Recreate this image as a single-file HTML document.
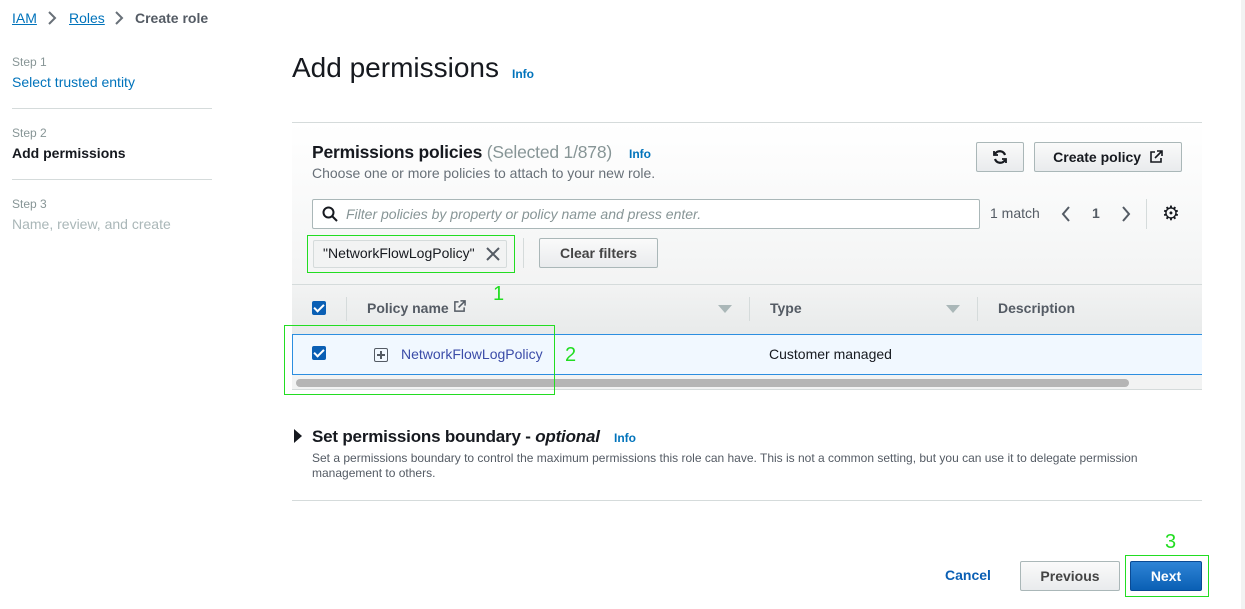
<!DOCTYPE html>
<html><head><meta charset="utf-8"><style>
*{box-sizing:border-box;margin:0;padding:0}
body{width:1245px;height:609px;position:relative;overflow:hidden;background:#fff;font-family:"Liberation Sans",Arial,sans-serif;color:#16191f;font-size:14px}
.a{position:absolute;white-space:nowrap}
.link{color:#0073bb}
.btn{position:absolute;border:1px solid #aab7b8;border-radius:2px;background:linear-gradient(#fafafa,#e9ebed);font-weight:bold;color:#444;font-size:14px;display:flex;align-items:center;justify-content:center}
.g{position:absolute;border:1px solid #22dd22}
.gn{position:absolute;color:#22dd22;font-size:20px}
.cb{position:absolute;width:14px;height:14px;background:#0a5fb4;border-radius:2px}
.cb:after{content:"";position:absolute;left:4px;top:1px;width:4px;height:8px;border:solid #fff;border-width:0 2px 2px 0;transform:rotate(45deg)}
.sep{position:absolute;width:1px;background:#d5dbdb}
</style></head><body>
<div style="position:absolute;right:0;top:0;width:4px;height:609px;background:#f2f3f3"></div>
<div class="a" style="left:12px;top:10px;font-size:14px"><span class="link" style="text-decoration:underline">IAM</span></div>
<svg class="a" style="left:47px;top:11px" width="10" height="14" viewBox="0 0 10 14" fill="none" stroke="#687078" stroke-width="2"><path d="M2 1l6 6-6 6"/></svg>
<div class="a" style="left:69px;top:10px"><span class="link" style="text-decoration:underline">Roles</span></div>
<svg class="a" style="left:114px;top:11px" width="10" height="14" viewBox="0 0 10 14" fill="none" stroke="#687078" stroke-width="2"><path d="M2 1l6 6-6 6"/></svg>
<div class="a" style="left:135px;top:10px;font-weight:bold;color:#545b64">Create role</div>

<div class="a" style="left:12px;top:55px;font-size:12px;color:#879596">Step 1</div>
<div class="a link" style="left:12px;top:74px">Select trusted entity</div>
<div style="position:absolute;left:12px;top:108px;width:200px;height:1px;background:#d5dbdb"></div>
<div class="a" style="left:12px;top:126px;font-size:12px;color:#879596">Step 2</div>
<div class="a" style="left:12px;top:145px;font-weight:bold">Add permissions</div>
<div style="position:absolute;left:12px;top:179px;width:200px;height:1px;background:#d5dbdb"></div>
<div class="a" style="left:12px;top:197px;font-size:12px;color:#879596">Step 3</div>
<div class="a" style="left:12px;top:216px;color:#aab7b8">Name, review, and create</div>

<div class="a" style="left:292px;top:52px;font-size:28px;color:#16191f">Add permissions</div>
<div class="a link" style="left:512px;top:67px;font-size:12px;font-weight:bold">Info</div>

<div style="position:absolute;left:292px;top:122px;width:910px;height:268px;border-top:1px solid #d5dbdb;border-bottom:1px solid #d5dbdb;background:linear-gradient(#fff 0px,#f2f3f3 170px)"></div>
<div class="a" style="left:312px;top:142px;font-size:17.5px;font-weight:bold;letter-spacing:-0.2px">Permissions policies <span style="font-weight:normal;color:#879596">(Selected 1/878)</span></div>
<div class="a link" style="left:629px;top:147px;font-size:12px;font-weight:bold">Info</div>
<div class="a" style="left:312px;top:165px;color:#687078">Choose one or more policies to attach to your new role.</div>
<div class="btn" style="left:976px;top:142px;width:48px;height:30px"><svg width="16" height="16" viewBox="0 0 16 16" fill="none" stroke="#16191f" stroke-width="2.2"><path d="M13 6A5.5 5.5 0 0 0 3 5M3 10a5.5 5.5 0 0 0 10 1"/><path d="M2 2v4h4M14 14v-4h-4" stroke-width="1.8"/></svg></div>
<div class="btn" style="left:1034px;top:142px;width:148px;height:30px;color:#16191f">Create policy&nbsp;&nbsp;<svg width="14" height="14" viewBox="0 0 14 14" fill="none" stroke="#16191f" stroke-width="1.6"><path d="M6 2H2v10h10V8M8 1h5v5M13 1L6 8"/></svg></div>

<div style="position:absolute;left:312px;top:199px;width:668px;height:30px;border:1px solid #aab7b8;border-radius:2px;background:#fff"></div>
<svg class="a" style="left:322px;top:206px" width="16" height="16" viewBox="0 0 16 16" fill="none" stroke="#16191f" stroke-width="2"><circle cx="6.5" cy="6.5" r="5"/><path d="M10 10l5 5"/></svg>
<div class="a" style="left:346px;top:206px;font-style:italic;color:#879596">Filter policies by property or policy name and press enter.</div>
<div class="a" style="left:990px;top:205px;color:#545b64">1 match</div>
<svg class="a" style="left:1061px;top:206px" width="10" height="16" viewBox="0 0 10 16" fill="none" stroke="#545b64" stroke-width="2"><path d="M8 1L2 8l6 7"/></svg>
<div class="a" style="left:1092px;top:205px;font-weight:bold;color:#545b64">1</div>
<svg class="a" style="left:1121px;top:206px" width="10" height="16" viewBox="0 0 10 16" fill="none" stroke="#545b64" stroke-width="2"><path d="M2 1l6 7-6 7"/></svg>
<div class="sep" style="left:1146px;top:199px;height:30px"></div>
<div class="a" style="left:1162px;top:201px;font-size:20px;color:#16191f">⚙</div>

<div style="position:absolute;left:313px;top:240px;width:194px;height:28px;border:1px solid #d5dbdb;border-radius:2px;background:#f2f3f3"></div>
<div class="a" style="left:323px;top:245px;color:#16191f">"NetworkFlowLogPolicy"</div>
<svg class="a" style="left:486px;top:247px" width="14" height="14" viewBox="0 0 14 14" stroke="#545b64" stroke-width="2"><path d="M1 1l12 12M13 1L1 13"/></svg>
<div class="sep" style="left:523px;top:238px;height:30px"></div>
<div class="btn" style="left:539px;top:238px;width:119px;height:30px">Clear filters</div>

<div style="position:absolute;left:292px;top:284px;width:910px;height:50px;border-top:1px solid #d5dbdb;background:linear-gradient(#f2f3f3,#e8eaea)"></div>
<div class="cb" style="left:312px;top:301px"></div>
<div class="sep" style="left:346px;top:297px;height:24px"></div>
<div class="a" style="left:367px;top:300px;font-weight:bold;color:#545b64">Policy name <svg width="13" height="13" viewBox="0 0 14 14" fill="none" stroke="#545b64" stroke-width="1.6"><path d="M6 2H2v10h10V8M8 1h5v5M13 1L6 8"/></svg></div>
<div class="a" style="left:718px;top:305px;width:0;height:0;border-left:7px solid transparent;border-right:7px solid transparent;border-top:8px solid #aab7b8"></div>
<div class="sep" style="left:749px;top:297px;height:24px"></div>
<div class="a" style="left:770px;top:300px;font-weight:bold;color:#545b64">Type</div>
<div class="a" style="left:946px;top:305px;width:0;height:0;border-left:7px solid transparent;border-right:7px solid transparent;border-top:8px solid #aab7b8"></div>
<div class="sep" style="left:977px;top:297px;height:24px"></div>
<div class="a" style="left:998px;top:300px;font-weight:bold;color:#545b64">Description</div>

<div style="position:absolute;left:292px;top:334px;width:910px;height:41px;border-top:1px solid #2c8ee0;border-bottom:1px solid #2c8ee0;border-left:1px solid #2c8ee0;background:#f1f8ff"></div>
<div class="cb" style="left:312px;top:346px"></div>
<div class="a" style="left:374px;top:348px;width:14px;height:14px;border:1.5px solid #545b64;border-radius:2px"></div>
<div class="a" style="left:377px;top:354px;width:8px;height:1.5px;background:#545b64"></div>
<div class="a" style="left:380px;top:351px;width:1.5px;height:8px;background:#545b64"></div>
<div class="a" style="left:401px;top:346px;color:#3b4ca8">NetworkFlowLogPolicy</div>
<div class="a" style="left:769px;top:346px;color:#16191f">Customer managed</div>
<div style="position:absolute;left:296px;top:379px;width:833px;height:8px;border-radius:4px;background:#b5b5b5"></div>

<div class="g" style="left:307px;top:235px;width:208px;height:38px"></div>
<div class="gn" style="left:493px;top:283px">1</div>
<div class="g" style="left:284px;top:325px;width:271px;height:70px"></div>
<div class="gn" style="left:565px;top:344px">2</div>

<div class="a" style="left:294px;top:429px;width:0;height:0;border-top:7px solid transparent;border-bottom:7px solid transparent;border-left:8px solid #16191f"></div>
<div class="a" style="left:312px;top:427px;font-size:17px;font-weight:bold;letter-spacing:-0.2px">Set permissions boundary - <i>optional</i></div>
<div class="a link" style="left:614px;top:431px;font-size:12px;font-weight:bold">Info</div>
<div style="position:absolute;left:312px;top:451px;width:860px;font-size:12px;line-height:15px;color:#545b64">Set a permissions boundary to control the maximum permissions this role can have. This is not a common setting, but you can use it to delegate permission management to others.</div>
<div style="position:absolute;left:292px;top:500px;width:910px;height:1px;background:#d5dbdb"></div>

<div class="a" style="left:945px;top:567px;font-weight:bold;color:#0a5fb4">Cancel</div>
<div class="btn" style="left:1020px;top:561px;width:100px;height:30px">Previous</div>
<div class="btn" style="left:1130px;top:561px;width:72px;height:30px;background:linear-gradient(#2e84d6,#0a5fb4);border-color:#0a4a94;color:#fff">Next</div>
<div class="g" style="left:1125px;top:555px;width:84px;height:42px"></div>
<div class="gn" style="left:1165px;top:531px">3</div>
</body></html>
